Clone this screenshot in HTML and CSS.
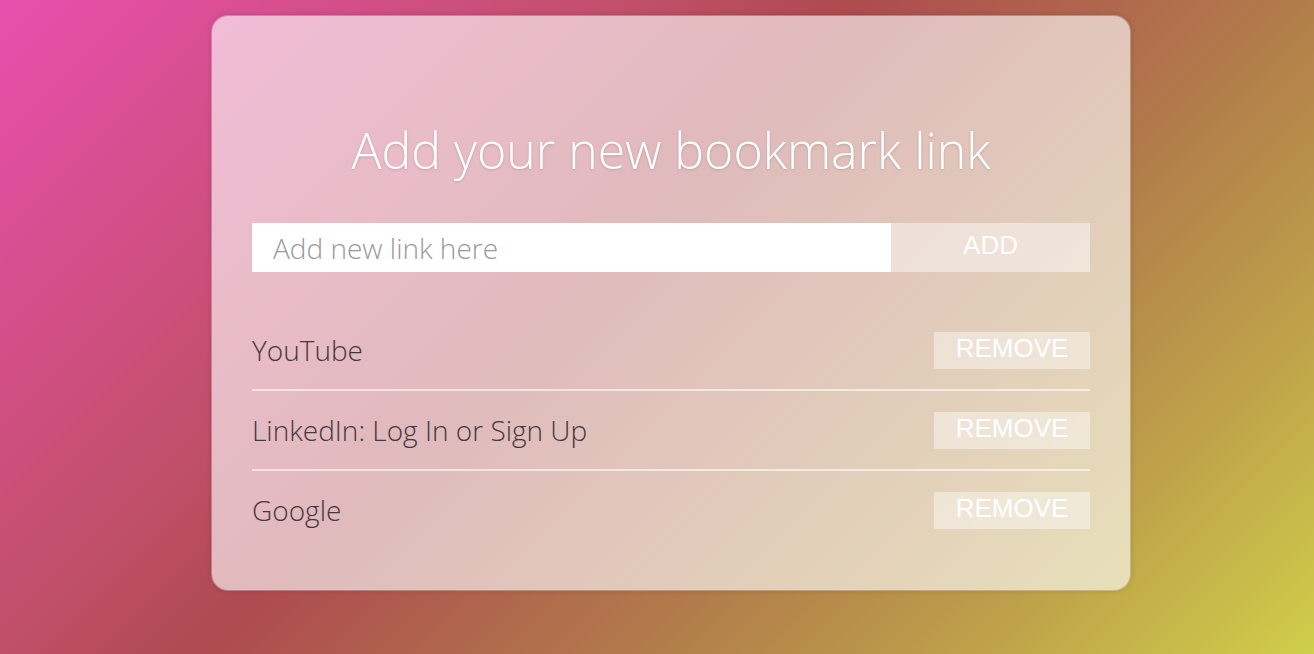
FILE: index.html
```html
<!DOCTYPE html>
<html lang="en">
<head>
<meta charset="utf-8">
<title>Bookmarks</title>
<link rel="stylesheet" href="styles.css">
</head>
<body>
  <main class="card">
    <h1 class="title">Add your new bookmark link</h1>
    <form class="add-form">
      <input class="link-input" type="text" placeholder="Add new link here">
      <button class="add-btn" type="button">ADD</button>
    </form>
    <ul class="list">
      <li class="item"><span class="item-name">YouTube</span><button class="remove-btn" type="button">REMOVE</button></li>
      <li class="item"><span class="item-name">LinkedIn: Log In or Sign Up</span><button class="remove-btn" type="button">REMOVE</button></li>
      <li class="item"><span class="item-name">Google</span><button class="remove-btn" type="button">REMOVE</button></li>
    </ul>
  </main>
</body>
</html>
```

FILE: styles.css
```css
* { box-sizing: border-box; }

html, body { height: 100%; }

body {
  margin: 0;
  font-family: "Open Sans", "Liberation Sans", sans-serif;
  background: linear-gradient(135deg, #e94fae 0%, #c04f68 33%, #ae4a50 43%, #b27e4a 67%, #bfa24a 83%, #d0ce4a 100%);
  display: flex;
  justify-content: center;
  align-items: flex-start;
  padding: 16px 0 0 28px;
}

.card {
  width: 918px;
  height: 574px;
  padding: 40px;
  border-radius: 16px;
  background: rgba(255, 255, 255, 0.62);
  box-shadow: 0 0 0 1px rgba(255, 255, 255, 0.3), 0 0 6px rgba(0, 0, 0, 0.18);
  display: flex;
  flex-direction: column;
}

.card > * { flex-shrink: 0; }

.title {
  margin: 60px 0 39px;
  text-align: center;
  font-weight: 300;
  font-size: 50px;
  line-height: 68px;
  color: #fff;
  text-shadow: 0 1px 3px rgba(0, 0, 0, 0.15);
}

.add-form {
  display: flex;
  margin: 0 0 39px;
  height: 49px;
}

.link-input {
  flex: 1;
  min-width: 0;
  border: none;
  outline: none;
  background: #fff;
  padding: 0 21px;
  font-family: "Open Sans", sans-serif;
  font-weight: 300;
  font-size: 28px;
  color: #333;
}

.link-input::placeholder {
  color: #9a9a9a;
}

.add-btn {
  width: 199px;
  border: none;
  background: rgba(255, 255, 255, 0.45);
  color: #fff;
  font-family: "Liberation Sans", Arial, sans-serif;
  font-size: 26px;
  padding: 0 0 4px;
  cursor: pointer;
}

.list {
  list-style: none;
  margin: 0;
  padding: 0;
}

.item {
  display: flex;
  justify-content: space-between;
  align-items: center;
  padding: 21px 0 20px;
  border-bottom: 2px solid rgba(255, 255, 255, 0.6);
}

.item:last-child { border-bottom: none; }

.item-name {
  font-weight: 300;
  font-size: 28px;
  line-height: 37px;
  color: #463840;
}

.remove-btn {
  width: 156px;
  height: 37px;
  border: none;
  background: rgba(255, 255, 255, 0.42);
  color: #fff;
  font-family: "Liberation Sans", Arial, sans-serif;
  font-size: 26px;
  padding: 0 0 4px;
  cursor: pointer;
}
```
